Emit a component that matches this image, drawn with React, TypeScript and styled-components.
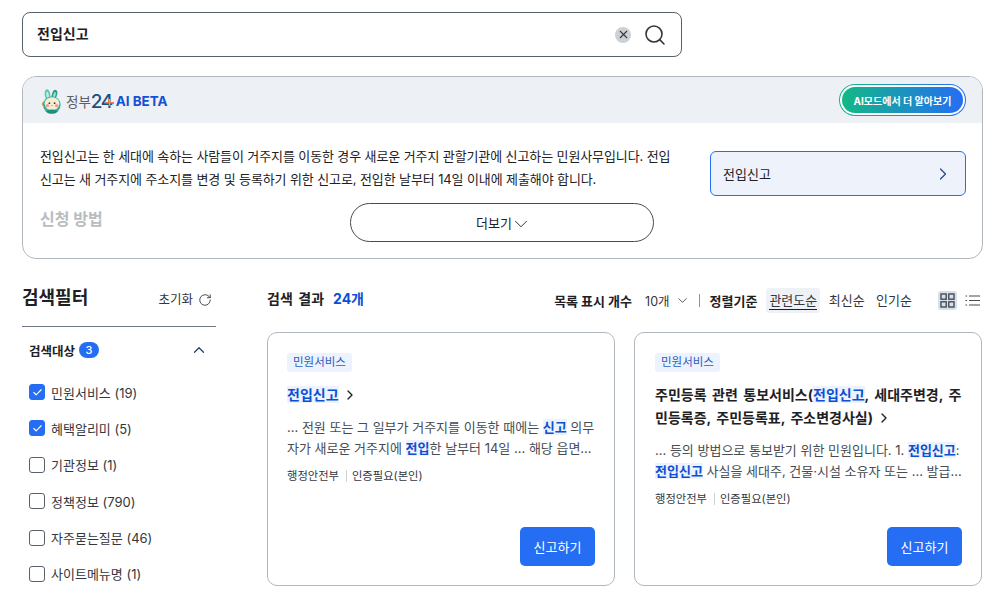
import React from 'react';
import styled, { createGlobalStyle } from 'styled-components';
import { ChevronDown, ChevronRight, ChevronUp, RotateCw, Search, X, Check } from 'lucide-react';

const GlobalStyle = createGlobalStyle`
  html, body {
    margin: 0;
    padding: 0;
    height: 100%;
    overflow: hidden;
    background: #fff;
  }
  body {
    font-family: "Inter", "Noto Sans CJK KR", "Noto Sans", sans-serif;
    color: #1e2124;
  }
`;

const Page = styled.div`
  padding: 12px 9px 0 22px;
`;

const SearchBox = styled.div`
  width: 660px;
  height: 45px;
  box-sizing: border-box;
  border: 1px solid #58616a;
  border-radius: 8px;
  display: flex;
  align-items: center;
  padding: 0 14px 0 14px;
  margin-bottom: 19px;
`;

const SearchText = styled.div`
  flex: 1;
  font-size: 14px;
  font-weight: 700;
  padding-bottom: 3px;
`;

const ClearButton = styled.span`
  width: 16px;
  height: 16px;
  border-radius: 50%;
  background: #cdd1d5;
  display: flex;
  align-items: center;
  justify-content: center;
  margin-right: 12px;
  color: #33363d;
`;

const AiPanel = styled.section`
  height: 183px;
  box-sizing: border-box;
  border: 1px solid #b1b8be;
  border-radius: 14px;
  overflow: hidden;
  margin-bottom: 25px;
`;

const AiHeader = styled.div`
  height: 46px;
  background: #edf0f5;
  display: flex;
  align-items: center;
  justify-content: space-between;
  padding: 0 16px 0 18px;
`;

const Logo = styled.div`
  display: flex;
  align-items: center;
  padding-top: 2px;
`;

const LogoKorean = styled.span`
  font-size: 13.5px;
  color: #5a6068;
  margin-left: 4px;
`;

const LogoNumber = styled.span`
  position: relative;
  font-size: 19px;
  font-weight: 500;
  letter-spacing: -1.5px;
  color: #1d4f7c;
  margin-right: 4px;
`;

const LogoCross = styled.svg`
  position: absolute;
  right: -2px;
  top: 8px;
`;

const LogoBeta = styled.span`
  font-size: 13.4px;
  font-weight: 700;
  color: #1450d2;
`;

const GradientRing = styled.div`
  width: 127px;
  height: 32px;
  box-sizing: border-box;
  padding: 1px;
  border-radius: 16px;
  background: linear-gradient(90deg, #12b886, #256ef4);
`;

const GradientInner = styled.div`
  height: 100%;
  box-sizing: border-box;
  padding: 2px;
  border-radius: 15px;
  background: #fff;
`;

const GradientButton = styled.div`
  height: 100%;
  border-radius: 13px;
  background: linear-gradient(90deg, #12b886, #256ef4);
  color: #fff;
  font-size: 10px;
  font-weight: 700;
  display: flex;
  align-items: center;
  justify-content: center;
`;

const AiBody = styled.div`
  display: flex;
  padding: 22px 16px 0 17px;
  gap: 38px;
`;

const AiContent = styled.div`
  width: 632px;
  flex: none;
`;

const Summary = styled.p`
  margin: 0;
  font-size: 13px;
  letter-spacing: -0.11px;
  line-height: 23px;
  color: #1e2124;
  white-space: nowrap;
`;

const AiFooter = styled.div`
  display: flex;
  align-items: flex-start;
  margin-top: 12px;
`;

const FadedTitle = styled.div`
  width: 310px;
  font-size: 16px;
  font-weight: 700;
  line-height: 22px;
  margin-top: 5px;
  color: #b9bdc1;
`;

const MoreButton = styled.div`
  width: 304px;
  height: 39px;
  box-sizing: border-box;
  border: 1px solid #464c53;
  border-radius: 20px;
  display: flex;
  align-items: center;
  justify-content: center;
  font-size: 13px;
  padding-left: 4px;
`;

const MoreChevron = styled(ChevronDown)`
  margin: 3px 0 0 -2px;
`;

const LinkCard = styled.div`
  width: 256px;
  height: 45px;
  margin-top: 6px;
  box-sizing: border-box;
  border: 1px solid #256ef4;
  border-radius: 6px;
  background: #eef2fb;
  display: flex;
  align-items: center;
  justify-content: space-between;
  padding: 0 12px 0 12px;
  font-size: 13px;
  color: #1e2124;
`;

const Columns = styled.div`
  display: flex;
  gap: 51px;
`;

const Sidebar = styled.aside`
  width: 194px;
  flex: none;
`;

const FilterHead = styled.div`
  height: 43px;
  box-sizing: border-box;
  border-bottom: 1px solid #6d7882;
  display: flex;
  align-items: flex-start;
  justify-content: space-between;
  padding-right: 4px;
`;

const FilterTitle = styled.div`
  font-size: 18px;
  font-weight: 700;
  line-height: 26px;
  margin-top: 1px;
`;

const ResetButton = styled.div`
  display: flex;
  align-items: center;
  gap: 5px;
  font-size: 12.5px;
  line-height: 26px;
  padding-top: 3px;
  color: #33363d;
`;

const GroupHead = styled.div`
  display: flex;
  align-items: center;
  justify-content: space-between;
  padding: 11px 8px 0 7px;
  height: 24px;
  margin-bottom: 22px;
`;

const GroupLabel = styled.div`
  display: flex;
  align-items: center;
  gap: 4px;
  font-size: 12.5px;
  font-weight: 700;
`;

const CountBadge = styled.span`
  width: 20px;
  height: 16px;
  border-radius: 8px;
  background: #256ef4;
  color: #fff;
  font-size: 11px;
  font-weight: 500;
  display: flex;
  align-items: center;
  justify-content: center;
`;

const FilterList = styled.div`
  display: flex;
  flex-direction: column;
  gap: 20.4px;
  padding-left: 7px;
`;

const FilterRow = styled.label`
  display: flex;
  align-items: center;
  gap: 6px;
  height: 16px;
  font-size: 13px;
  color: #33363d;
`;

const CheckBox = styled.span<{ $on?: boolean }>`
  width: 16px;
  height: 16px;
  box-sizing: border-box;
  border-radius: 3px;
  border: 1px solid ${(p) => (p.$on ? '#256ef4' : '#58616a')};
  background: ${(p) => (p.$on ? '#256ef4' : '#fff')};
  color: #fff;
  display: flex;
  align-items: center;
  justify-content: center;
`;

const Main = styled.main`
  flex: 1;
  min-width: 0;
`;

const ResultBar = styled.div`
  height: 48px;
  display: flex;
  align-items: flex-start;
  justify-content: space-between;
`;

const ResultCount = styled.div`
  display: flex;
  gap: 9px;
  font-size: 14px;
  font-weight: 700;
  line-height: 26px;
  word-spacing: 2.2px;
  padding-top: 2px;
`;

const ResultNumber = styled.span`
  color: #0b50d0;
`;

const Controls = styled.div`
  display: flex;
  align-items: center;
  height: 32px;
  font-size: 13px;
  color: #33363d;
  padding-right: 1px;
`;

const ControlLabel = styled.span`
  font-weight: 700;
  color: #1e2124;
`;

const PageSize = styled.span`
  display: flex;
  align-items: center;
  gap: 5px;
  margin: 0 0 0 13px;
  font-size: 12.5px;
`;

const Divider = styled.span`
  width: 1px;
  height: 13px;
  background: #8a949e;
  margin: 0 10px 0 9px;
`;

const SortItem = styled.span<{ $active?: boolean }>`
  margin-left: ${(p) => (p.$active ? '9px' : '5.5px')};
  padding: 0 3px;
  height: 25px;
  line-height: 24px;
  border-radius: 3px;
  background: ${(p) => (p.$active ? '#eef2f7' : 'transparent')};
  box-sizing: border-box;
  & > span {
    border-bottom: ${(p) => (p.$active ? '1px solid #1e2124' : 'none')};
    padding-bottom: 1px;
  }
`;

const ViewToggle = styled.span<{ $active?: boolean }>`
  width: 19px;
  height: 19px;
  border-radius: 3px;
  background: ${(p) => (p.$active ? '#d6e0eb' : 'transparent')};
  display: flex;
  align-items: center;
  justify-content: center;
  margin-left: ${(p) => (p.$active ? '23px' : '6px')};
  color: #464c53;
`;

const CardGrid = styled.div`
  display: grid;
  grid-template-columns: 348px 348px;
  gap: 19px;
`;

const Card = styled.article`
  height: 254px;
  box-sizing: border-box;
  border: 1px solid #b1b8be;
  border-radius: 10px;
  padding: 20px 19px 19px 19px;
  display: flex;
  flex-direction: column;
  &:nth-child(2) {
    padding-left: 20px;
  }
`;

const Tag = styled.span`
  align-self: flex-start;
  height: 19px;
  line-height: 19px;
  padding: 0 6px;
  border-radius: 3px;
  background: #ecf2fe;
  color: #2d5cc4;
  font-size: 11.5px;
  margin-bottom: 11px;
`;

const CardTitle = styled.h3`
  margin: 0 0 11px;
  font-size: 14px;
  font-weight: 700;
  line-height: 23px;
  word-spacing: 2.2px;
  white-space: nowrap;
  color: #1e2124;
  display: block;
`;

const Mark = styled.mark`
  background: #ecf2fe;
  color: #0b50d0;
  font-weight: 700;
`;

const TitleChevron = styled(ChevronRight)`
  vertical-align: -3px;
  margin-left: 3px;
`;

const Excerpt = styled.p`
  margin: 0 0 8px;
  font-size: 13px;
  line-height: 20.5px;
  color: #464c53;
  white-space: nowrap;
`;

const Meta = styled.div`
  display: flex;
  align-items: center;
  font-size: 11.3px;
  line-height: 20px;
  color: #33363d;
`;

const MetaDivider = styled.span`
  width: 1px;
  height: 12px;
  background: #cdd1d5;
  margin: 0 5px 0 7px;
`;

const ReportButton = styled.div`
  margin-top: auto;
  align-self: flex-end;
  width: 75px;
  height: 39px;
  border-radius: 5px;
  background: #256ef4;
  color: #fff;
  font-size: 13px;
  display: flex;
  align-items: center;
  justify-content: center;
`;

const filters = [
  { label: '민원서비스 (19)', on: true },
  { label: '혜택알리미 (5)', on: true },
  { label: '기관정보 (1)', on: false },
  { label: '정책정보 (790)', on: false },
  { label: '자주묻는질문 (46)', on: false },
  { label: '사이트메뉴명 (1)', on: false },
];

const Rabbit = () => (
  <svg width="21" height="25" viewBox="0 0 21 25">
    <ellipse cx="6.5" cy="5.5" rx="2.8" ry="5.2" fill="#58c9b4" transform="rotate(-8 6.5 5.5)" />
    <ellipse cx="6.6" cy="6" rx="1.2" ry="3.4" fill="#c7efe2" transform="rotate(-8 6.6 6)" />
    <ellipse cx="13.5" cy="5.5" rx="2.6" ry="4.8" fill="#2e9c8b" transform="rotate(16 13.5 5.5)" />
    <ellipse cx="13.4" cy="6" rx="1.1" ry="3" fill="#a9e4d3" transform="rotate(16 13.4 6)" />
    <circle cx="3" cy="15" r="2.2" fill="#c9a24f" />
    <circle cx="10.8" cy="16" r="8.8" fill="#34b09c" />
    <ellipse cx="11" cy="14.6" rx="7.4" ry="6.4" fill="#f6ecd3" />
    <circle cx="8.4" cy="14.2" r="0.9" fill="#3a3a3a" />
    <circle cx="13.6" cy="14.2" r="0.9" fill="#3a3a3a" />
    <circle cx="6.4" cy="16.6" r="1.7" fill="#f59a93" />
    <circle cx="15.6" cy="16.6" r="1.7" fill="#f59a93" />
    <path d="M10.2 16.4q.8.7 1.6 0" stroke="#c46a5f" strokeWidth="0.6" fill="none" />
    <ellipse cx="10.8" cy="22.6" rx="5.5" ry="2" fill="#1c8f7e" />
  </svg>
);

const GridIcon = () => (
  <svg width="15" height="15" viewBox="0 0 15 15" fill="none" stroke="currentColor" strokeWidth="1.4">
    <rect x="1" y="1" width="5.2" height="5.2" />
    <rect x="8.8" y="1" width="5.2" height="5.2" />
    <rect x="1" y="8.8" width="5.2" height="5.2" />
    <rect x="8.8" y="8.8" width="5.2" height="5.2" />
  </svg>
);

const ListIcon = () => (
  <svg width="15" height="13" viewBox="0 0 15 13" fill="none" stroke="currentColor" strokeWidth="1.2">
    <path d="M0.5 2h1.6M4 2h11M0.5 6.5h1.6M4 6.5h11M0.5 11h1.6M4 11h11" />
  </svg>
);

export default function App() {
  return (
    <Page>
      <GlobalStyle />
      <SearchBox>
        <SearchText>전입신고</SearchText>
        <ClearButton>
          <X size={13} strokeWidth={2} />
        </ClearButton>
        <Search size={24} strokeWidth={1.6} color="#33363d" />
      </SearchBox>

      <AiPanel>
        <AiHeader>
          <Logo>
            <Rabbit />
            <LogoKorean>정부</LogoKorean>
            <LogoNumber>
              24
              <LogoCross width="9" height="9" viewBox="0 0 9 9">
                <path d="M0 5h9" stroke="#ef4a3c" strokeWidth="1.6" />
                <path d="M4.5 1v7" stroke="#f59e2e" strokeWidth="1.6" />
              </LogoCross>
            </LogoNumber>
            <LogoBeta>AI BETA</LogoBeta>
          </Logo>
          <GradientRing>
            <GradientInner>
              <GradientButton>AI모드에서 더 알아보기</GradientButton>
            </GradientInner>
          </GradientRing>
        </AiHeader>
        <AiBody>
          <AiContent>
            <Summary>
              전입신고는 한 세대에 속하는 사람들이 거주지를 이동한 경우 새로운 거주지 관할기관에 신고하는 민원사무입니다. 전입
              <br />
              신고는 새 거주지에 주소지를 변경 및 등록하기 위한 신고로, 전입한 날부터 14일 이내에 제출해야 합니다.
            </Summary>
            <AiFooter>
              <FadedTitle>신청 방법</FadedTitle>
              <MoreButton>
                더보기 <MoreChevron size={22} strokeWidth={1} />
              </MoreButton>
            </AiFooter>
          </AiContent>
          <LinkCard>
            전입신고
            <ChevronRight size={20} strokeWidth={1.5} color="#2a4a8a" />
          </LinkCard>
        </AiBody>
      </AiPanel>

      <Columns>
        <Sidebar>
          <FilterHead>
            <FilterTitle>검색필터</FilterTitle>
            <ResetButton>
              초기화 <RotateCw size={14} strokeWidth={1.5} />
            </ResetButton>
          </FilterHead>
          <GroupHead>
            <GroupLabel>
              검색대상 <CountBadge>3</CountBadge>
            </GroupLabel>
            <ChevronUp size={18} strokeWidth={1.6} color="#1d3f66" />
          </GroupHead>
          <FilterList>
            {filters.map((f) => (
              <FilterRow key={f.label}>
                <CheckBox $on={f.on}>{f.on && <Check size={11} strokeWidth={2.4} />}</CheckBox>
                {f.label}
              </FilterRow>
            ))}
          </FilterList>
        </Sidebar>

        <Main>
          <ResultBar>
            <ResultCount>
              검색 결과 <ResultNumber>24개</ResultNumber>
            </ResultCount>
            <Controls>
              <ControlLabel>목록 표시 개수</ControlLabel>
              <PageSize>
                10개 <ChevronDown size={15} strokeWidth={1.3} />
              </PageSize>
              <Divider />
              <ControlLabel>정렬기준</ControlLabel>
              <SortItem $active>
                <span>관련도순</span>
              </SortItem>
              <SortItem>최신순</SortItem>
              <SortItem>인기순</SortItem>
              <ViewToggle $active>
                <GridIcon />
              </ViewToggle>
              <ViewToggle>
                <ListIcon />
              </ViewToggle>
            </Controls>
          </ResultBar>
          <CardGrid>
            <Card>
              <Tag>민원서비스</Tag>
              <CardTitle>
                <Mark>전입신고</Mark>
                <TitleChevron size={16} strokeWidth={2} />
              </CardTitle>
              <Excerpt>
                ... 전원 또는 그 일부가 거주지를 이동한 때에는 <Mark>신고</Mark> 의무
                <br />
                자가 새로운 거주지에 <Mark>전입</Mark>한 날부터 14일 ... 해당 읍면…
              </Excerpt>
              <Meta>
                행정안전부
                <MetaDivider />
                인증필요(본인)
              </Meta>
              <ReportButton>신고하기</ReportButton>
            </Card>
            <Card>
              <Tag>민원서비스</Tag>
              <CardTitle>
                주민등록 관련 통보서비스(<Mark>전입신고</Mark>, 세대주변경, 주
                <br />
                민등록증, 주민등록표, 주소변경사실)
                <TitleChevron size={16} strokeWidth={2} />
              </CardTitle>
              <Excerpt>
                ... 등의 방법으로 통보받기 위한 민원입니다. 1. <Mark>전입신고</Mark>:
                <br />
                <Mark>전입신고</Mark> 사실을 세대주, 건물·시설 소유자 또는 ... 발급…
              </Excerpt>
              <Meta>
                행정안전부
                <MetaDivider />
                인증필요(본인)
              </Meta>
              <ReportButton>신고하기</ReportButton>
            </Card>
          </CardGrid>
        </Main>
      </Columns>
    </Page>
  );
}
